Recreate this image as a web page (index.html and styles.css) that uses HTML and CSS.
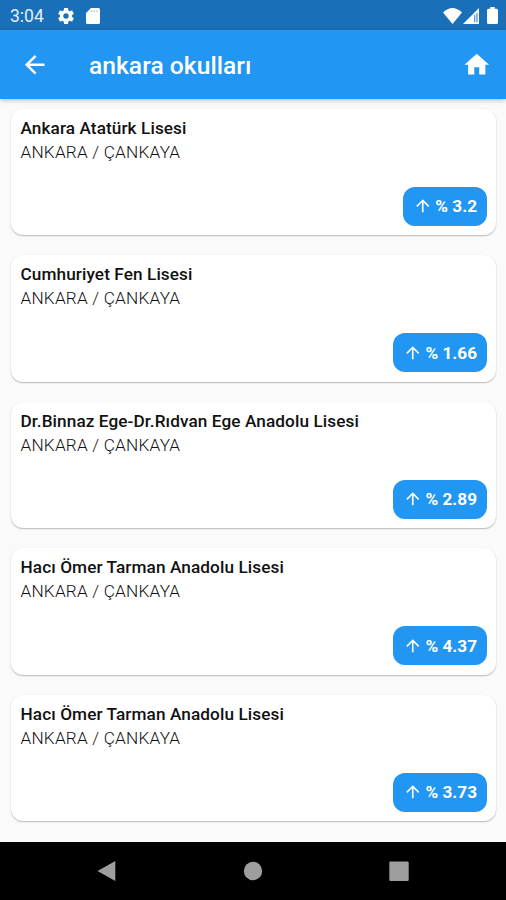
FILE: index.html
```html
<!DOCTYPE html>
<html lang="tr">
<head>
<meta charset="utf-8">
<title>ankara okulları</title>
<link rel="stylesheet" href="styles.css">
</head>
<body>
<svg class="defs" aria-hidden="true">
  <symbol id="up" viewBox="0 0 24 24"><path d="M4 12l1.41 1.41L11 7.83V20h2V7.83l5.58 5.59L20 12l-8-8-8 8z"/></symbol>
</svg>
<div class="status">
  <span class="time">3:04</span>
  <svg class="gear" viewBox="2 2 20 20"><path d="M19.43 12.98c.04-.32.07-.64.07-.98s-.03-.66-.07-.98l2.11-1.65c.19-.15.24-.42.12-.64l-2-3.46c-.12-.22-.39-.3-.61-.22l-2.49 1c-.52-.4-1.08-.73-1.69-.98l-.38-2.65C14.46 2.18 14.25 2 14 2h-4c-.25 0-.46.18-.49.42l-.38 2.65c-.61.25-1.17.59-1.69.98l-2.49-1c-.23-.09-.49 0-.61.22l-2 3.46c-.13.22-.07.49.12.64l2.11 1.65c-.04.32-.07.65-.07.98s.03.66.07.98l-2.11 1.65c-.19.15-.24.42-.12.64l2 3.46c.12.22.39.3.61.22l2.49-1c.52.4 1.08.73 1.69.98l.38 2.65c.03.24.24.42.49.42h4c.25 0 .46-.18.49-.42l.38-2.65c.61-.25 1.17-.59 1.69-.98l2.49 1c.23.09.49 0 .61-.22l2-3.46c.12-.22.07-.49-.12-.64l-2.11-1.65zM12 15.5c-1.93 0-3.5-1.57-3.5-3.5s1.57-3.5 3.5-3.5 3.5 1.57 3.5 3.5-1.57 3.5-3.5 3.5z"/></svg>
  <svg class="sd" viewBox="0 0 14 16"><path d="M5 0h7.400q1.600 0 1.600 1.600v12.800q0 1.600-1.600 1.600H1.600Q0 16 0 14.400V5z"/><path class="contacts" d="M5 2.200h1.300v1.800H5zM7.700 2.200H9v1.800H7.700zM10.400 2.200h1.300v1.800h-1.300z"/></svg>
  <span class="spacer"></span>
  <svg class="wifi" viewBox="0 0 19 16"><path d="M0 4.500Q9.500-4.500 19 4.500L9.500 16z"/></svg>
  <svg class="cell" viewBox="0 0 16 16"><path fill-rule="evenodd" d="M16 0v16H0zM11.300 6.800v7.500h.9V6.800zM13.500 5v9.300h1V5z"/></svg>
  <svg class="battery" viewBox="0 0 11 17"><path d="M3.300 0h4.400v1.800h1.800q1.500 0 1.500 1.500v12.200q0 1.500-1.500 1.500h-8Q0 17 0 15.500V3.300q0-1.500 1.500-1.500h1.800z"/></svg>
</div>
<header class="appbar">
  <svg class="icon" viewBox="0 0 24 24"><path d="M20 11H7.830l5.590-5.590L12 4l-8 8 8 8 1.410-1.410L7.830 13H20v-2z"/></svg>
  <h1>ankara okulları</h1>
  <svg class="icon" viewBox="0 0 24 24"><path d="M10 20v-6h4v6h5v-8h3L12 3 2 12h3v8z"/></svg>
</header>
<main class="list">
  <article class="card">
    <h2>Ankara Atatürk Lisesi</h2><p>ANKARA / ÇANKAYA</p>
    <div class="chip"><svg><use href="#up"/></svg><span>% 3.2</span></div>
  </article>
  <article class="card">
    <h2>Cumhuriyet Fen Lisesi</h2><p>ANKARA / ÇANKAYA</p>
    <div class="chip"><svg><use href="#up"/></svg><span>% 1.66</span></div>
  </article>
  <article class="card">
    <h2>Dr.Binnaz Ege-Dr.Rıdvan Ege Anadolu Lisesi</h2><p>ANKARA / ÇANKAYA</p>
    <div class="chip"><svg><use href="#up"/></svg><span>% 2.89</span></div>
  </article>
  <article class="card">
    <h2>Hacı Ömer Tarman Anadolu Lisesi</h2><p>ANKARA / ÇANKAYA</p>
    <div class="chip"><svg><use href="#up"/></svg><span>% 4.37</span></div>
  </article>
  <article class="card">
    <h2>Hacı Ömer Tarman Anadolu Lisesi</h2><p>ANKARA / ÇANKAYA</p>
    <div class="chip"><svg><use href="#up"/></svg><span>% 3.73</span></div>
  </article>
</main>
<nav class="navbar">
  <svg viewBox="0 0 20 22"><path d="M18.300 1v20L.5 11z"/></svg>
  <svg viewBox="0 0 20 22"><circle cx="10" cy="11" r="9.200"/></svg>
  <svg viewBox="0 0 20 22"><rect x=".3" y="1.500" width="19.400" height="19.400" rx="1.200"/></svg>
</nav>
</body>
</html>
```
FILE: styles.css
```css
* { box-sizing: border-box; }
body {
  margin: 0;
  width: 506px;
  height: 900px;
  overflow: hidden;
  display: flex;
  flex-direction: column;
  background: #fafafa;
  font-family: Roboto, sans-serif;
  color: #111;
}
h1, h2, p { margin: 0; }
svg { display: block; fill: currentColor; flex: none; }
.defs { display: none; }
.status {
  height: 30px;
  flex: none;
  display: flex;
  align-items: center;
  padding: 1px 8px 0 10px;
  background: #1a70b8;
  color: #fff;
}
.time { width: 48px; font-size: 17.5px; line-height: 30px; color: #e4eef7; }
.gear { width: 16px; height: 16px; }
.sd { width: 14px; height: 16px; margin-left: 12px; }
.contacts { fill: #a9cbe6; }
.spacer { flex: 1; }
.wifi { width: 19px; height: 16px; }
.cell { width: 16px; height: 16px; margin-left: 1px; }
.battery { width: 11px; height: 17px; margin-left: 8px; }
.appbar {
  position: relative;
  height: 69px;
  flex: none;
  display: flex;
  align-items: center;
  padding: 0 14.500px 0 20px;
  background: #2196f3;
  color: #fff;
  box-shadow: 0 1px 5px rgba(0, 0, 0, .28);
}
.icon { width: 29.500px; height: 29.500px; }
.appbar h1 { flex: 1; margin-left: 39.500px; padding-top: 2px; font-size: 24.600px; line-height: 30px; font-weight: 500; letter-spacing: .03px; }
.list {
  flex: none;
  height: 743px;
  display: flex;
  flex-direction: column;
  gap: 20px;
  padding: 9.500px 10px 0 11px;
}
.card {
  height: 126.500px;
  flex: none;
  display: flex;
  flex-direction: column;
  padding: 7px 9px 9.500px 9.500px;
  border-radius: 12px;
  background: #fff;
  box-shadow: 0 1px 1.500px rgba(0, 0, 0, .26), 0 0 1px rgba(0, 0, 0, .08);
}
.card h2 { font-size: 17.200px; line-height: 24px; font-weight: 500; letter-spacing: .09px; white-space: nowrap; }
.card p { font-size: 17.200px; line-height: 24px; font-weight: 300; letter-spacing: .2px; }
.chip {
  align-self: flex-end;
  margin-top: auto;
  height: 39px;
  display: flex;
  align-items: center;
  gap: 3px;
  padding: 0 10px 0 9.500px;
  border-radius: 12px;
  background: #2196f3;
  color: #fff;
  font-size: 17.200px;
  font-weight: 700;
}
.chip svg { width: 19.500px; height: 19.500px; }
.navbar {
  flex: none;
  height: 58px;
  display: flex;
  align-items: center;
  gap: 126px;
  padding-left: 97px;
  background: #000;
  color: #9e9e9e;
}
.navbar svg { width: 20px; height: 22px; }
```
